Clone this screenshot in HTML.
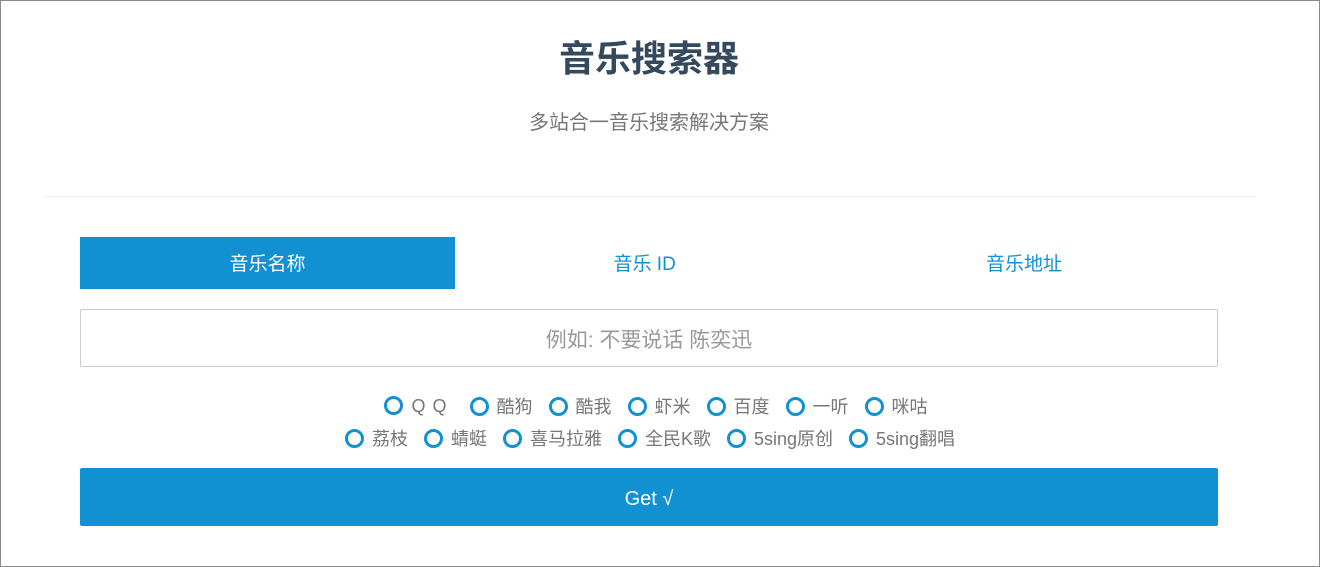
<!DOCTYPE html>
<html><head><meta charset="utf-8"><style>
*{box-sizing:border-box;margin:0;padding:0}
body{width:1320px;height:567px;background:#fff;font-family:"Liberation Sans","Noto Sans CJK SC",sans-serif;overflow:hidden}
.frame{position:absolute;left:0;top:0;width:1320px;height:567px;border:1px solid #8a8a8a}
h1{position:absolute;top:36px;left:0;width:1298px;text-align:center;font-size:36px;font-weight:bold;color:#34495e;line-height:46px}
.sub{position:absolute;top:109px;left:0;width:1298px;text-align:center;font-size:20px;color:#777;line-height:28px}
.hr{position:absolute;top:196px;left:44px;width:1212px;height:1px;background:#eee}
.tabs{position:absolute;top:237px;left:80px;width:1138px;height:52px;display:flex}
.tab{width:379.33px;text-align:center;line-height:56px;font-size:19px;color:#1191d2}
.tab.on{background:#1191d2;color:#fff;width:375px}
.inp{position:absolute;top:309px;left:80px;width:1138px;height:58px;border:1px solid #ccc;border-radius:2px;text-align:center;line-height:62px;font-size:21px;color:#999}
.row{position:absolute;left:0;width:1300px;text-align:center;font-size:18px;color:#777;white-space:nowrap}
.it{display:inline-block;margin:0 8px;vertical-align:middle}
.c{display:inline-block;width:19px;height:19px;border:3px solid #1191d2;border-radius:50%;vertical-align:-3px;margin-right:8px}
.btn{position:absolute;top:468px;left:80px;width:1138px;height:58px;background:#1191d2;border-radius:2px;color:#fff;text-align:center;line-height:62px;font-size:20px}
</style></head><body>
<div class="frame"></div>
<h1>音乐搜索器</h1>
<div class="sub">多站合一音乐搜索解决方案</div>
<div class="hr"></div>
<div class="tabs"><div class="tab on">音乐名称</div><div class="tab">音乐 ID</div><div class="tab">音乐地址</div></div>
<div class="inp">例如: 不要说话 陈奕迅</div>
<div class="row" style="top:393px;left:6px"><span class="it"><span class="c"></span><span style="letter-spacing:7px">QQ</span></span><span class="it"><span class="c"></span>酷狗</span><span class="it"><span class="c"></span>酷我</span><span class="it"><span class="c"></span>虾米</span><span class="it"><span class="c"></span>百度</span><span class="it"><span class="c"></span>一听</span><span class="it"><span class="c"></span>咪咕</span></div>
<div class="row" style="top:425px"><span class="it"><span class="c"></span>荔枝</span><span class="it"><span class="c"></span>蜻蜓</span><span class="it"><span class="c"></span>喜马拉雅</span><span class="it"><span class="c"></span>全民K歌</span><span class="it"><span class="c"></span>5sing原创</span><span class="it"><span class="c"></span>5sing翻唱</span></div>
<div class="btn">Get √</div>
</body></html>
